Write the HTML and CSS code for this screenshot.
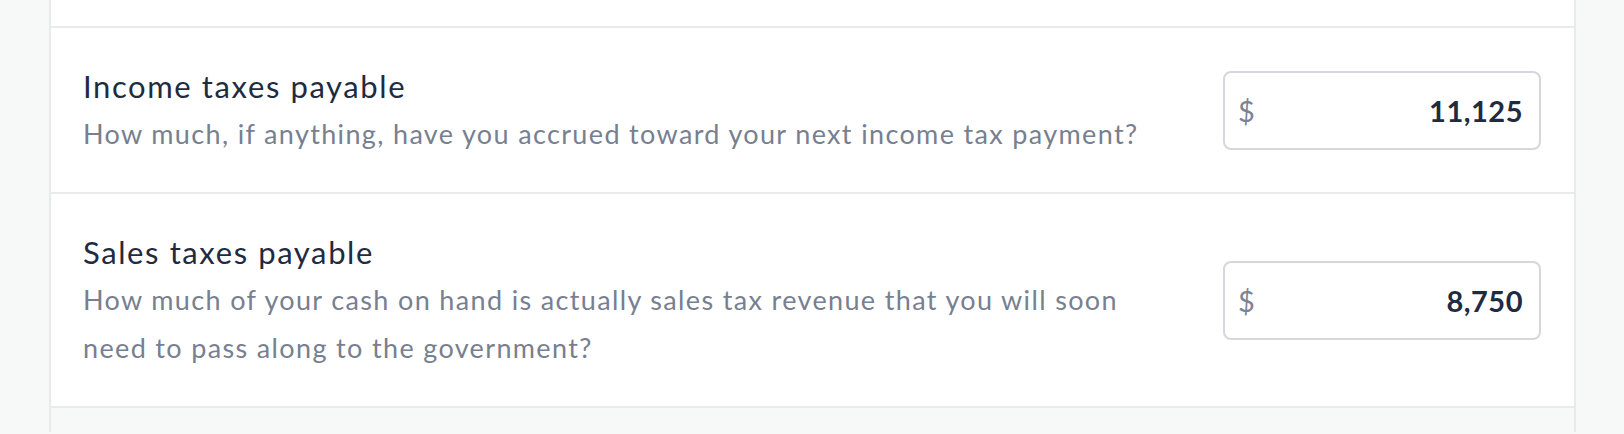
FILE: index.html
```html
<!DOCTYPE html>
<html lang="en">
<head>
    <meta charset="UTF-8">
    <meta name="viewport" content="width=device-width, initial-scale=1.0">
    <title>Liabilities</title>
    <link rel="stylesheet" href="styles.css">
</head>
<body>
    <div class="page">
        <div class="card">
            <div class="row row-prev"></div>

            <div class="row">
                <div class="row-text">
                    <h3>Income taxes payable</h3>
                    <p>How much, if anything, have you accrued toward your next income tax payment?</p>
                </div>
                <label class="money">
                    <span class="money-sign">$</span>
                    <input type="text" value="11,125">
                </label>
            </div>

            <div class="row">
                <div class="row-text">
                    <h3>Sales taxes payable</h3>
                    <p>How much of your cash on hand is actually sales tax revenue that you will soon need to pass along to the government?</p>
                </div>
                <label class="money">
                    <span class="money-sign">$</span>
                    <input type="text" value="8,750">
                </label>
            </div>

            <div class="row row-foot"></div>
        </div>
    </div>
</body>
</html>
```

FILE: styles.css
```css
body {
    font-family: 'Lato', 'Noto Sans', sans-serif;
    background: #f7f8f8;
    color: #1e2b40;
    margin: 0;
    height: 100vh;
    overflow: hidden;
}

.page {
    padding: 0 48px 0 49px;
}

.card {
    background: #ffffff;
    border-left: 2px solid #e9eaeb;
    border-right: 2px solid #e9eaeb;
}

.row {
    display: flex;
    align-items: center;
    justify-content: space-between;
    padding: 34px 33px 34px 32px;
    border-top: 2px solid #e9eaeb;
}

.row-prev {
    height: 26px;
    padding: 0;
    border-top: none;
}

.row-foot {
    background: #f7f8f8;
    height: 24px;
    padding: 0;
}

.row-text {
    max-width: 1080px;
}

.row-text h3 {
    margin: 0;
    font-size: 31px;
    font-weight: 400;
    letter-spacing: 1.6px;
    line-height: 48px;
    color: #1e2b40;
}

.row-text p {
    margin: 0;
    font-size: 27px;
    letter-spacing: 1.35px;
    line-height: 48px;
    color: #777f90;
}

.money {
    display: flex;
    align-items: center;
    width: 318px;
    height: 79px;
    box-sizing: border-box;
    border: 2px solid #d6d7dc;
    border-radius: 8px;
    padding: 0 16px 0 13px;
    flex-shrink: 0;
}

.money-sign {
    font-size: 29px;
    color: #7b8394;
}

.money input {
    flex: 1;
    min-width: 0;
    border: none;
    outline: none;
    background: transparent;
    text-align: right;
    font-family: inherit;
    font-size: 29px;
    font-weight: 700;
    letter-spacing: 0.5px;
    color: #1e2b40;
    padding: 0;
}
```
